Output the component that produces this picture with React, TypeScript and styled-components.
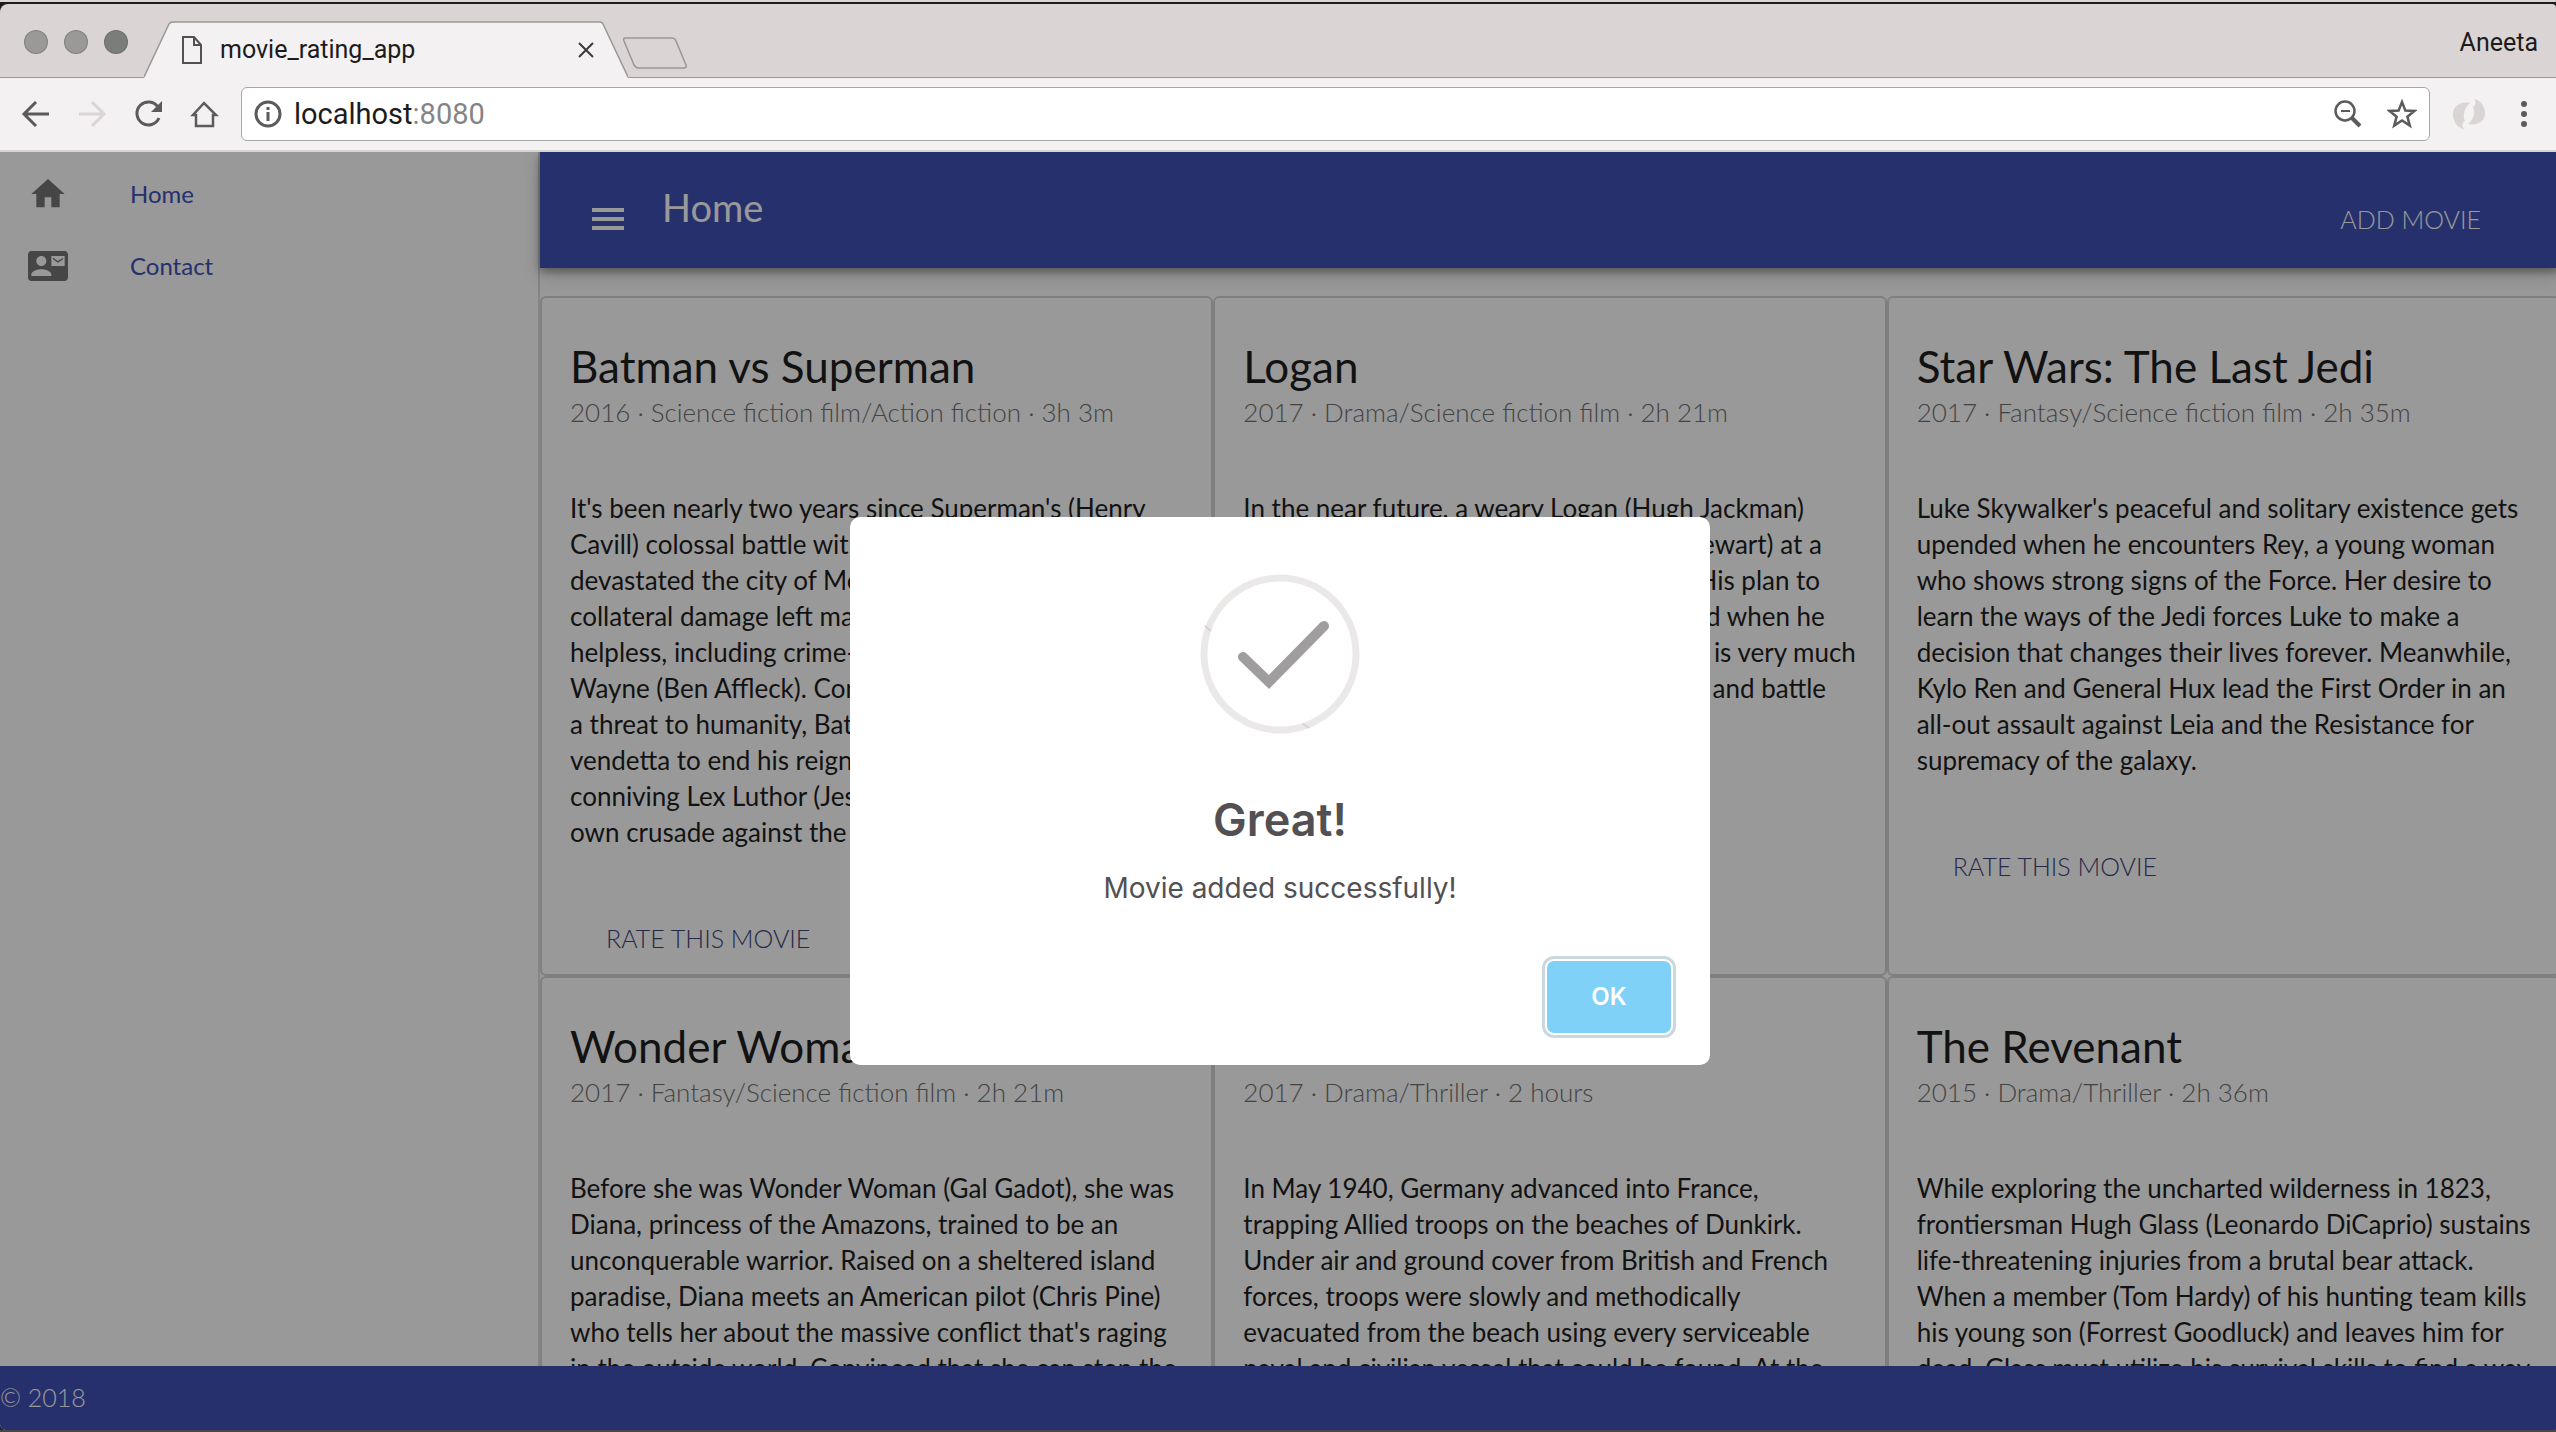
import React from "react";
import styled, { createGlobalStyle } from "styled-components";

const bodyFont = `Lato, "Open Sans", sans-serif`;
const chromeFont = `Roboto, "Liberation Sans", sans-serif`;
const alertFont = `Inter, Roboto, sans-serif`;

const GlobalStyle = createGlobalStyle`
  *, *::before, *::after { box-sizing: border-box; }
  body { margin: 0; background: #1c1b1d; font-family: ${bodyFont}; }
  h1, h2, p, ul { margin: 0; padding: 0; }
  button { font: inherit; border: 0; padding: 0; background: none; color: inherit; cursor: pointer; }
  a { color: inherit; text-decoration: none; }
`;

const Window = styled.div`
  display: flex;
  flex-direction: column;
  height: 100vh;
  overflow: hidden;
  border-top: 2px solid #dad5d5;
  border-bottom: 2px solid #4a4548;
  background: #1c1b1d;
`;

const TabStrip = styled.header`
  display: flex;
  align-items: flex-end;
  flex: none;
  height: 74px;
  margin-top: 2px;
  padding-right: 18px;
  background: #dad5d4;
  border-bottom: 1px solid #9a9696;
  border-radius: 8px 4px 0 0;
`;

const TrafficLights = styled.div`
  display: flex;
  align-self: center;
  gap: 16px;
  padding: 2px 16px 0 24px;
`;

const Light = styled.span<{ $color: string }>`
  width: 24px;
  height: 24px;
  border-radius: 50%;
  background: ${(p) => p.$color};
  border: 1px solid rgba(80, 80, 80, 0.35);
`;

const Tab = styled.div`
  position: relative;
  display: flex;
  align-items: center;
  width: 484px;
  height: 57px;
  margin-bottom: -1px;
  padding: 0 34px 0 38px;
`;

const TabShape = styled.svg`
  position: absolute;
  inset: 0;
  width: 100%;
  height: 100%;
`;

const TabTitle = styled.span`
  position: relative;
  flex: 1;
  margin-left: 18px;
  font: 400 25px/32px ${chromeFont};
  color: #1c1b1d;
`;

const TabIcon = styled.svg`
  position: relative;
  display: block;
`;

const TabClose = styled.button`
  position: relative;
  display: flex;
`;

const NewTab = styled.button`
  display: flex;
  align-self: center;
  margin: 28px auto 4px -6px;
`;

const Profile = styled.button`
  align-self: center;
  padding-top: 4px;
  font: 400 25px/32px ${chromeFont};
  color: #1c1b1d;
`;

const Toolbar = styled.nav`
  display: flex;
  align-items: center;
  flex: none;
  gap: 24px;
  height: 74px;
  padding: 0 18px 0 20px;
  background: #f3f1f1;
  border-bottom: 2px solid #dad5d4;
`;

const NavButton = styled.button<{ $dim?: boolean }>`
  display: flex;
  color: ${(p) => (p.$dim ? "#dad5d4" : "#5c5a5b")};
`;

const AddressBar = styled.div`
  display: flex;
  align-items: center;
  flex: 1;
  gap: 12px;
  height: 54px;
  margin: 0 -2px 0 -3px;
  padding: 0 12px;
  background: #fff;
  border: 1px solid #a9a6a6;
  border-radius: 6px;
  color: #5c5a5b;
`;

const Address = styled.span`
  flex: 1;
  font: 400 29px/36px ${chromeFont};
  color: #858485;
  b { font-weight: 400; color: #1c1b1d; }
`;

const BarButton = styled.button`
  display: flex;
  margin-left: 12px;
`;

/* The page is a touch wider than the window and runs off its right edge. */
const Page = styled.div`
  position: relative;
  display: flex;
  flex-direction: column;
  flex: 1;
  min-height: 0;
  margin-right: -4px;
  overflow: hidden;
  background: #fff;
  border-radius: 0 0 6px 6px;
`;

const Columns = styled.div`
  display: flex;
  flex: 1;
  min-height: 0;
`;

const Sidebar = styled.nav`
  flex: none;
  width: 540px;
  padding-top: 6px;
  border-right: 2px solid #dcdcdc;
  ul { list-style: none; }
`;

const SidebarLink = styled.a`
  display: grid;
  grid-template-columns: 102px 1fr;
  align-items: center;
  height: 72px;
  padding-left: 28px;
  font-size: 24px;
  line-height: 32px;
  color: #3f51b5;
  svg { fill: #757575; }
`;

const Content = styled.main`
  display: flex;
  flex-direction: column;
  flex: 1;
  min-width: 0;
`;

const AppBar = styled.header`
  position: relative;
  display: flex;
  align-items: center;
  flex: none;
  height: 116px;
  padding: 0 79px 0 52px;
  background: #3f51b5;
  color: #fff;
  box-shadow: 0 4px 8px rgba(0, 0, 0, 0.35), 0 8px 20px rgba(0, 0, 0, 0.14);
`;

const MenuButton = styled.button`
  display: flex;
  margin: 20px 38px 0 0;
`;

const AppTitle = styled.h1`
  flex: 1;
  padding-bottom: 6px;
  font-size: 38px;
  line-height: 48px;
  font-weight: 400;
`;

const AddMovie = styled.button`
  padding-top: 18px;
  font-size: 25px;
  line-height: 32px;
  font-weight: 300;
`;

const Cards = styled.section`
  display: grid;
  grid-template-columns: repeat(3, 1fr);
  grid-auto-rows: max-content;
  flex: 1;
  min-height: 0;
  padding-top: 28px;
  overflow: hidden;
`;

const Card = styled.article`
  padding: 44px 8px 8px 28px;
  border: 2px solid #d4d4d4;
  border-radius: 6px;
`;

const MovieTitle = styled.h2`
  font-size: 44px;
  line-height: 48px;
  font-weight: 400;
  color: #1f1f1f;
`;

const MovieMeta = styled.p`
  font-size: 26px;
  line-height: 44px;
  font-weight: 300;
  color: #707070;
`;

const Description = styled.p`
  padding-top: 56px;
  font-size: 26px;
  line-height: 36px;
  color: #1f1f1f;
  white-space: pre-line;
`;

const RateButton = styled.button`
  display: block;
  margin: 60px 0 0 36px;
  font-size: 25px;
  line-height: 56px;
  font-weight: 300;
  color: #3f4679;
`;

const Footer = styled.footer`
  flex: none;
  height: 64px;
  font-size: 25px;
  line-height: 62px;
  font-weight: 300;
  color: #fff;
  background: #3f51b5;
`;

const Overlay = styled.div`
  position: absolute;
  inset: 0;
  display: flex;
  align-items: center;
  justify-content: center;
  background: rgba(0, 0, 0, 0.4);
`;

const Alert = styled.div`
  display: flex;
  flex-direction: column;
  align-items: center;
  width: 860px;
  padding: 57px 34px 27px;
  background: #fff;
  border-radius: 10px;
  font-family: ${alertFont};
  color: #525052;
`;

const AlertTitle = styled.h2`
  margin-top: 58px;
  font-size: 45px;
  line-height: 56px;
  font-weight: 600;
`;

const AlertText = styled.p`
  margin-top: 22px;
  font-size: 28px;
  line-height: 36px;
`;

const AlertButton = styled.button`
  align-self: flex-end;
  width: 134px;
  height: 82px;
  margin-top: 50px;
  border: 3px solid #cbd8df;
  border-radius: 12px;
  padding: 2px;
  background: #7fd1f7 content-box;
  font: 600 24px/32px ${alertFont};
  color: #fff;
`;

const movies = [
  {
    title: "Batman vs Superman",
    meta: "2016 · Science fiction film/Action fiction · 3h 3m",
    text: `It's been nearly two years since Superman's (Henry
Cavill) colossal battle with Zod (Michael Shannon)
devastated the city of Metropolis. The loss of life and
collateral damage left many feeling angry and
helpless, including crime-fighting billionaire Bruce
Wayne (Ben Affleck). Convinced that Superman is now
a threat to humanity, Batman embarks on a personal
vendetta to end his reign on Earth, while the
conniving Lex Luthor (Jesse Eisenberg) launches his
own crusade against the Man of Steel.`,
  },
  {
    title: "Logan",
    meta: "2017 · Drama/Science fiction film · 2h 21m",
    text: `In the near future, a weary Logan (Hugh Jackman)
cares for an ailing Professor X (Patrick Stewart) at a
remote outpost on the Mexican border. His plan to
hide from the outside world gets upended when he
meets a young mutant (Dafne Keen) who is very much
like him. Logan must now protect the girl and battle
the dark forces that want to capture her.`,
  },
  {
    title: "Star Wars: The Last Jedi",
    meta: "2017 · Fantasy/Science fiction film · 2h 35m",
    text: `Luke Skywalker's peaceful and solitary existence gets
upended when he encounters Rey, a young woman
who shows strong signs of the Force. Her desire to
learn the ways of the Jedi forces Luke to make a
decision that changes their lives forever. Meanwhile,
Kylo Ren and General Hux lead the First Order in an
all-out assault against Leia and the Resistance for
supremacy of the galaxy.`,
  },
  {
    title: "Wonder Woman",
    meta: "2017 · Fantasy/Science fiction film · 2h 21m",
    text: `Before she was Wonder Woman (Gal Gadot), she was
Diana, princess of the Amazons, trained to be an
unconquerable warrior. Raised on a sheltered island
paradise, Diana meets an American pilot (Chris Pine)
who tells her about the massive conflict that's raging
in the outside world. Convinced that she can stop the`,
  },
  {
    title: "Dunkirk",
    meta: "2017 · Drama/Thriller · 2 hours",
    text: `In May 1940, Germany advanced into France,
trapping Allied troops on the beaches of Dunkirk.
Under air and ground cover from British and French
forces, troops were slowly and methodically
evacuated from the beach using every serviceable
naval and civilian vessel that could be found. At the`,
  },
  {
    title: "The Revenant",
    meta: "2015 · Drama/Thriller · 2h 36m",
    text: `While exploring the uncharted wilderness in 1823,
frontiersman Hugh Glass (Leonardo DiCaprio) sustains
life-threatening injuries from a brutal bear attack.
When a member (Tom Hardy) of his hunting team kills
his young son (Forrest Goodluck) and leaves him for
dead. Glass must utilize his survival skills to find a way`,
  },
];

const stroke = { fill: "none", stroke: "currentColor", strokeWidth: 3 };

function BrowserChrome() {
  return (
    <>
      <TabStrip>
        <TrafficLights>
          <Light $color="#9a9998" />
          <Light $color="#9a9998" />
          <Light $color="#7b7d7b" />
        </TrafficLights>
        <Tab>
          <TabShape viewBox="0 0 484 57" preserveAspectRatio="none" aria-hidden="true">
            <path d="M0 57 L25 3 Q26 1 29 1 H456 Q458 1 459 3 L484 57Z" fill="#f3f1f1" />
            <path d="M0 56 L25 3 Q26 1 29 1 H456 Q458 1 459 3 L484 56" fill="none" stroke="#9a9696" strokeWidth="1.5" />
          </TabShape>
          <TabIcon width="20" height="28" viewBox="0 0 20 28" {...stroke} color="#525052" strokeWidth="2" aria-hidden="true">
            <path d="M1 1H12L19 9V27H1Z M12 1V9H19" />
          </TabIcon>
          <TabTitle>movie_rating_app</TabTitle>
          <TabClose aria-label="Close tab">
            <svg width="16" height="16" viewBox="0 0 16 16" {...stroke} color="#3c3a3c" strokeWidth="2">
              <path d="M1 1L15 15M15 1L1 15" />
            </svg>
          </TabClose>
        </Tab>
        <NewTab aria-label="New tab">
          <svg width="66" height="32" viewBox="0 0 66 32" fill="#dad5d4" stroke="#9a9696" strokeWidth="1.5">
            <path d="M3 1H50Q53 1 54 4L64 28Q65 31 62 31H17Q14 31 12 28L2 4Q1 1 3 1Z" />
          </svg>
        </NewTab>
        <Profile>Aneeta</Profile>
      </TabStrip>
      <Toolbar>
        <NavButton aria-label="Back">
          <svg width="32" height="32" viewBox="0 0 32 32" {...stroke}>
            <path d="M29 16H5M16 4L4 16L16 28" />
          </svg>
        </NavButton>
        <NavButton aria-label="Forward" $dim>
          <svg width="32" height="32" viewBox="0 0 32 32" {...stroke}>
            <path d="M3 16H27M16 4L28 16L16 28" />
          </svg>
        </NavButton>
        <NavButton aria-label="Reload">
          <svg width="32" height="32" viewBox="0 0 32 32" {...stroke}>
            <path d="M26 9A11.500 11.500 0 1 0 27 20" />
            <path d="M30 3V14H19Z" fill="currentColor" stroke="none" />
          </svg>
        </NavButton>
        <NavButton aria-label="Home page">
          <svg width="32" height="32" viewBox="0 0 32 32" {...stroke} strokeWidth="2.5">
            <path d="M16 5L5 17H8V28H25V17H28Z" />
          </svg>
        </NavButton>
        <AddressBar>
          <svg width="28" height="28" viewBox="0 0 28 28" {...stroke} aria-hidden="true">
            <circle cx="14" cy="14" r="12" />
            <path d="M14 12V21M14 7V10" />
          </svg>
          <Address><b>localhost</b>:8080</Address>
          <BarButton aria-label="Zoom">
            <svg width="30" height="30" viewBox="0 0 30 30" {...stroke} strokeWidth="2.5">
              <circle cx="12" cy="12" r="9.5" />
              <path d="M19 19L27 27" strokeWidth="4" />
              <path d="M8 12H17" strokeWidth="2" />
            </svg>
          </BarButton>
          <BarButton aria-label="Bookmark this page">
            <svg width="30" height="30" viewBox="0 0 30 30" {...stroke} strokeWidth="2.5">
              <path d="M15 3L18.400 11.600L27.500 12L20.400 17.700L22.800 26.600L15 21.500L7.200 26.600L9.600 17.700L2.500 12L11.600 11.600Z" />
            </svg>
          </BarButton>
        </AddressBar>
        <NavButton aria-label="Extension" $dim>
          <svg width="34" height="32" viewBox="0 0 34 32" fill="currentColor">
            <path d="M18 5C8 3 0 9 1 18C2 25 6 30 12 31C9 27 11 24 13 23C10 17 13 9 18 5Z" />
            <path d="M16 26C26 28 34 23 33 14C32 7 28 2 22 1C25 5 23 8 21 9C24 15 21 22 16 26Z" />
          </svg>
        </NavButton>
        <NavButton aria-label="Menu">
          <svg width="28" height="28" viewBox="0 0 28 28" fill="currentColor">
            <circle cx="14" cy="4" r="3" />
            <circle cx="14" cy="14" r="3" />
            <circle cx="14" cy="24" r="3" />
          </svg>
        </NavButton>
      </Toolbar>
    </>
  );
}

export default function App() {
  return (
    <Window>
      <GlobalStyle />
      <BrowserChrome />
      <Page>
        <Columns>
          <Sidebar>
            <ul>
              <li>
                <SidebarLink href="#home">
                  <svg width="40" height="40" viewBox="0 0 24 24" aria-hidden="true">
                    <path d="M10 20v-6h4v6h5v-8h3L12 3 2 12h3v8z" />
                  </svg>
                  Home
                </SidebarLink>
              </li>
              <li>
                <SidebarLink href="#contact">
                  <svg width="40" height="40" viewBox="0 0 24 24" aria-hidden="true">
                    <path d="M21 8V7l-3 2-3-2v1l3 2 3-2zm1-5H2C.9 3 0 3.900 0 5v14c0 1.100.9 2 2 2h20c1.100 0 1.990-.9 1.990-2L24 5c0-1.100-.9-2-2-2zM8 6c1.660 0 3 1.340 3 3s-1.340 3-3 3-3-1.340-3-3 1.340-3 3-3zm6 12H2v-1c0-2 4-3.100 6-3.100s6 1.100 6 3.100v1zm8-6h-8V6h8v6z" />
                  </svg>
                  Contact
                </SidebarLink>
              </li>
            </ul>
          </Sidebar>
          <Content>
            <AppBar>
              <MenuButton aria-label="Toggle navigation">
                <svg width="32" height="24" viewBox="0 0 32 24" fill="#fff">
                  <path d="M0 0H32V4H0ZM0 9H32V13H0ZM0 18H32V22H0Z" />
                </svg>
              </MenuButton>
              <AppTitle>Home</AppTitle>
              <AddMovie>ADD MOVIE</AddMovie>
            </AppBar>
            <Cards>
              {movies.map((m) => (
                <Card key={m.title}>
                  <MovieTitle>{m.title}</MovieTitle>
                  <MovieMeta>{m.meta}</MovieMeta>
                  <Description>{m.text}</Description>
                  <RateButton>RATE THIS MOVIE</RateButton>
                </Card>
              ))}
            </Cards>
          </Content>
        </Columns>
        <Footer>© 2018</Footer>
        <Overlay>
          <Alert role="alertdialog" aria-labelledby="alert-title" aria-describedby="alert-text">
            <svg width="160" height="160" viewBox="0 0 160 160" fill="none" aria-hidden="true">
              <circle cx="80" cy="80" r="76" stroke="#ebe8e8" strokeWidth="7" />
              <path d="M5 52L11 57M103 150L109 154" stroke="#d6d1d1" strokeWidth="2" />
              <path d="M43 83L69 108L124 52" stroke="#9f9d9d" strokeWidth="10" strokeLinecap="round" />
            </svg>
            <AlertTitle id="alert-title">Great!</AlertTitle>
            <AlertText id="alert-text">Movie added successfully!</AlertText>
            <AlertButton>OK</AlertButton>
          </Alert>
        </Overlay>
      </Page>
    </Window>
  );
}
